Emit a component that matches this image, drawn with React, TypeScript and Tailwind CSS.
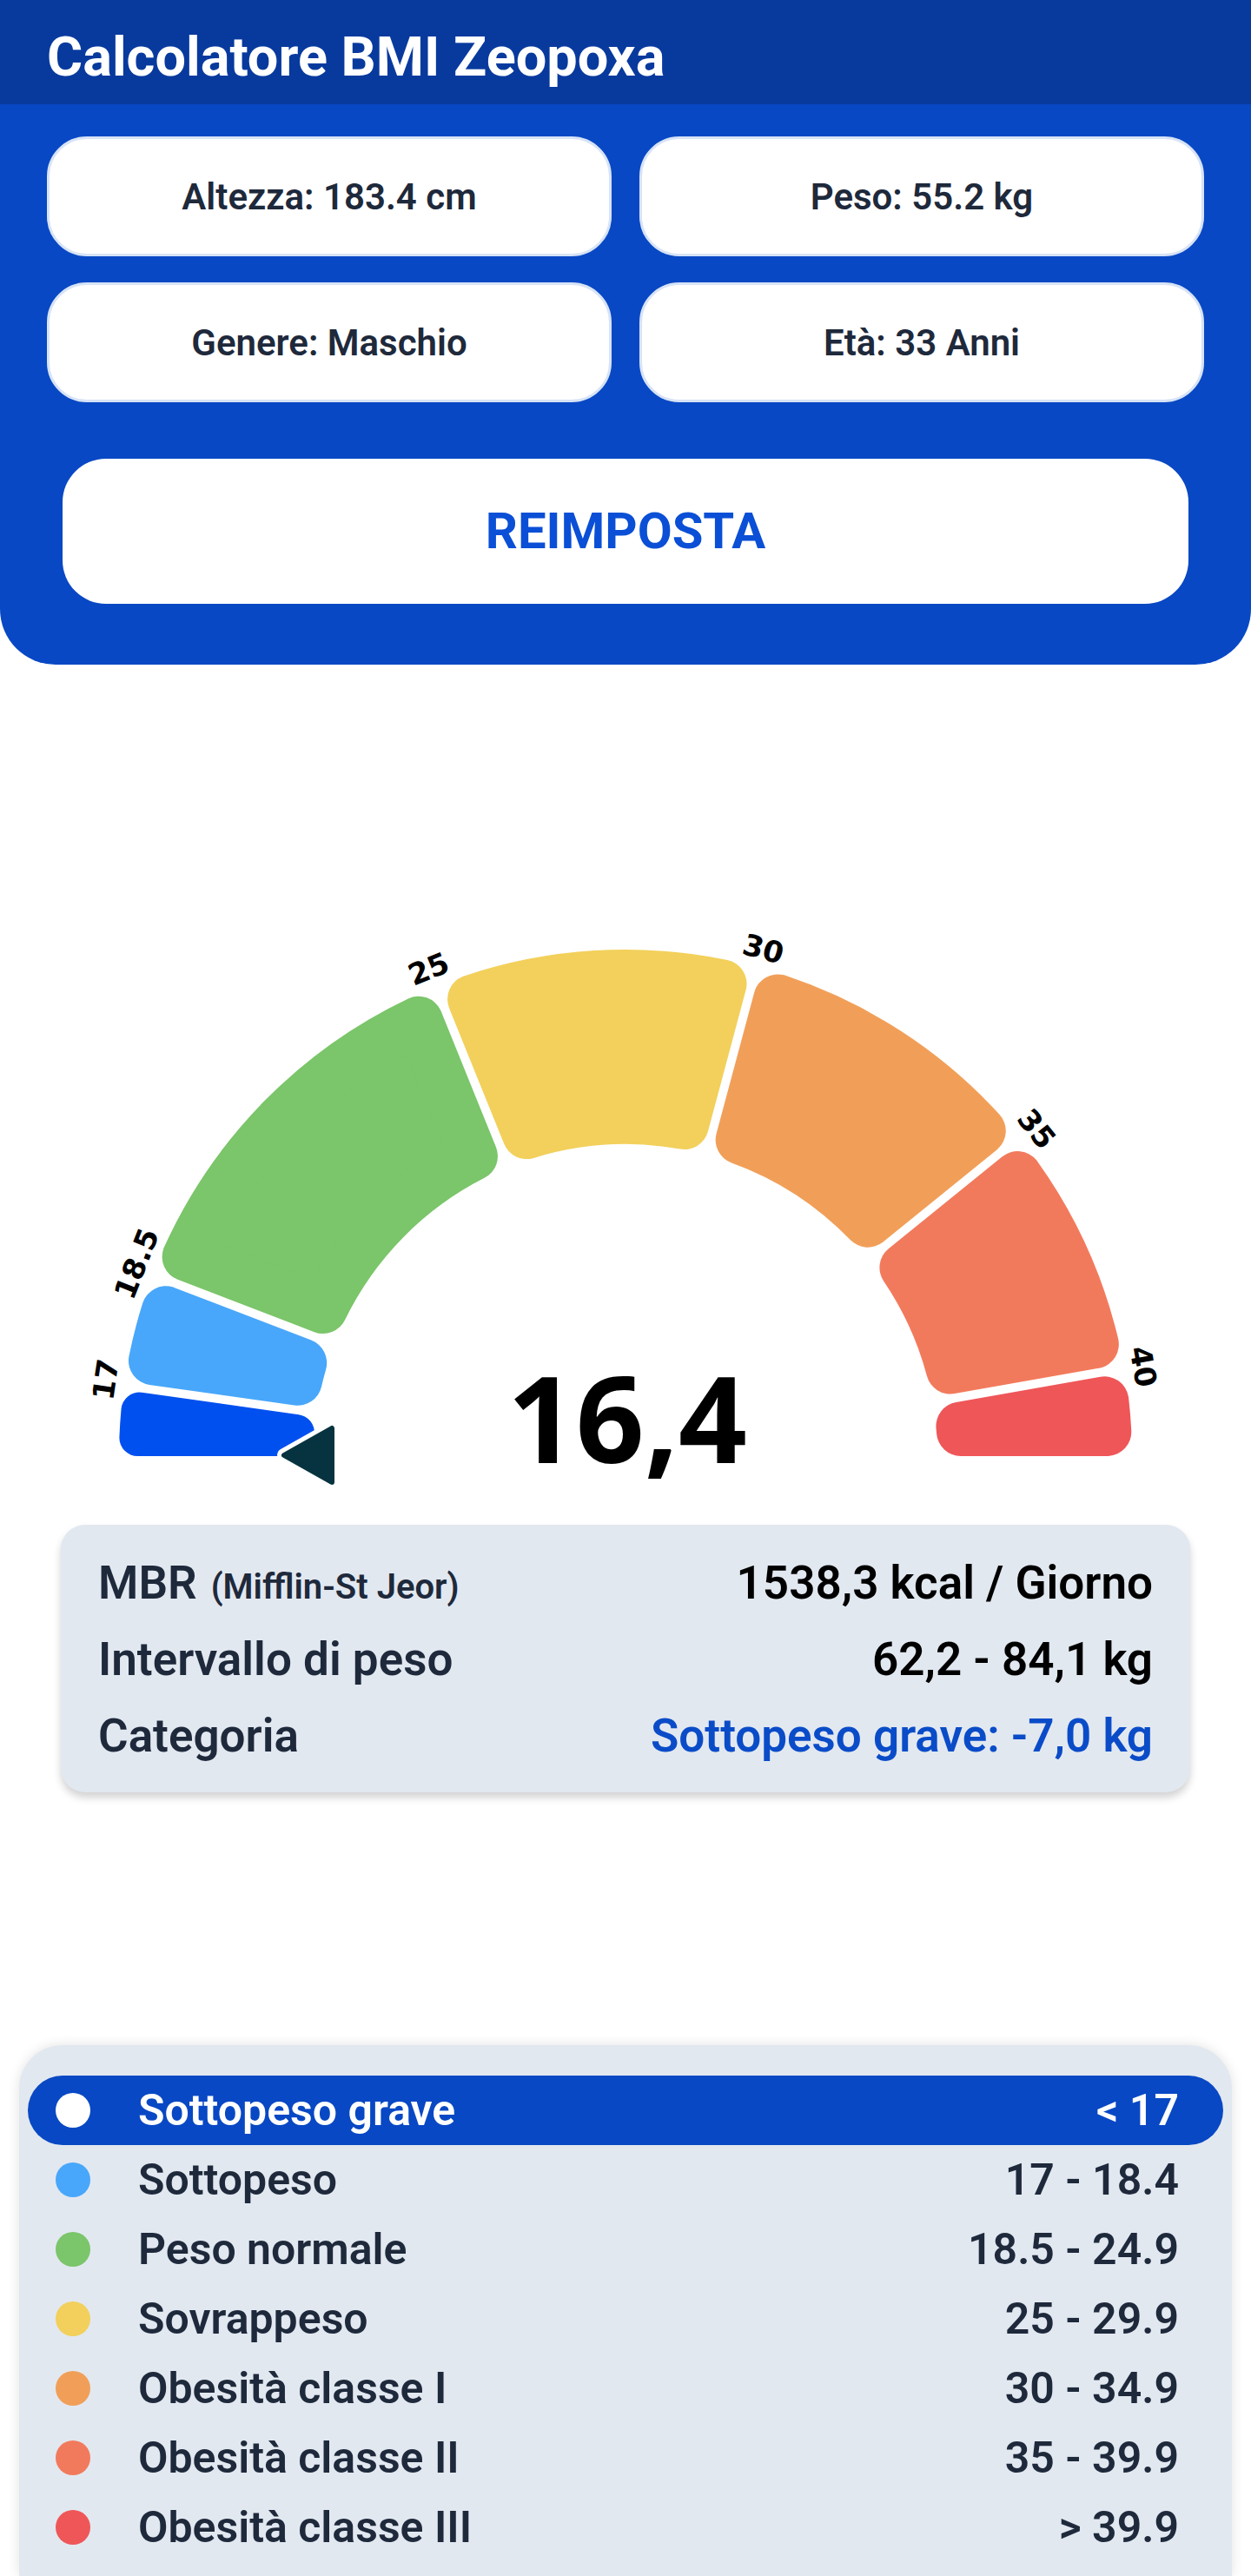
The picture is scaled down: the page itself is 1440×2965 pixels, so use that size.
import React from "react";

const CX = 720;
const CY = 1676;
const R_OUT = 583;
const R_IN = 359;

type Seg = { a1: number; a2: number; c: string; rc?: number; g1?: number; g2?: number };

const segs: Seg[] = [
  { a1: 180, a2: 172, c: "#0050ef", rc: 21, g1: 0, g2: 5 },
  { a1: 172, a2: 159, c: "#48a7fa" },
  { a1: 159, a2: 112, c: "#7bc56a" },
  { a1: 112, a2: 75, c: "#f2d05b" },
  { a1: 75, a2: 39, c: "#f19f58" },
  { a1: 39, a2: 10, c: "#f27a5c" },
  { a1: 10, a2: 0, c: "#ef5658", g2: 0 },
];

const labels = [
  { v: "17", a: 171.6 },
  { v: "18.5", a: 158.5 },
  { v: "25", a: 112 },
  { v: "30", a: 74.8 },
  { v: "35", a: 38.5 },
  { v: "40", a: 9.8 },
];

const rad = (d: number) => (d * Math.PI) / 180;
const pt = (rho: number, aRad: number) =>
  `${(CX + rho * Math.cos(aRad)).toFixed(2)} ${(CY - rho * Math.sin(aRad)).toFixed(2)}`;

function sectorPath(s: Seg) {
  const rc = s.rc ?? 28;
  const g1 = s.g1 ?? 5;
  const g2 = s.g2 ?? 5;
  const Ro = R_OUT - rc;
  const Ri = R_IN + rc;
  const d1 = g1 + rc;
  const d2 = g2 + rc;
  const A1o = rad(s.a1) - Math.asin(d1 / Ro);
  const A2o = rad(s.a2) + Math.asin(d2 / Ro);
  const A1i = rad(s.a1) - Math.asin(d1 / Ri);
  const A2i = rad(s.a2) + Math.asin(d2 / Ri);
  return {
    d: `M ${pt(Ro, A1o)} A ${Ro} ${Ro} 0 0 1 ${pt(Ro, A2o)} L ${pt(Ri, A2i)} A ${Ri} ${Ri} 0 0 0 ${pt(Ri, A1i)} Z`,
    rc,
  };
}

function Gauge() {
  return (
    <svg
      width={1440}
      height={990}
      viewBox="0 765 1440 990"
      className="block"
      xmlns="http://www.w3.org/2000/svg"
    >
      {segs.map((s, i) => {
        const p = sectorPath(s);
        return (
          <path
            key={i}
            d={p.d}
            fill={s.c}
            stroke={s.c}
            strokeWidth={p.rc * 2}
            strokeLinejoin="round"
          />
        );
      })}
      {labels.map((l) => {
        const x = CX + 605 * Math.cos(rad(l.a));
        const y = CY - 605 * Math.sin(rad(l.a));
        return (
          <text
            key={l.v}
            x={x}
            y={y}
            transform={`rotate(${90 - l.a} ${x} ${y})`}
            textAnchor="middle"
            dominantBaseline="central"
            fontFamily="'DejaVu Sans', sans-serif"
            fontWeight={700}
            fontSize={34}
            fill="#000"
          >
            {l.v}
          </text>
        );
      })}
      <polygon
        points="327,1675 382,1644 382,1706"
        fill="#ffffff"
        stroke="#ffffff"
        strokeWidth={16}
        strokeLinejoin="round"
      />
      <polygon
        points="327,1675 382,1644 382,1706"
        fill="#06333f"
        stroke="#06333f"
        strokeWidth={6}
        strokeLinejoin="round"
      />
      <text
        x={722}
        y={1684}
        textAnchor="middle"
        fontFamily="'Noto Sans', 'Open Sans', sans-serif"
        fontWeight={700}
        fontSize={138}
        fill="#000"
      >
        16,4
      </text>
    </svg>
  );
}

const legend = [
  { name: "Sottopeso grave", range: "< 17", c: "#ffffff", active: true },
  { name: "Sottopeso", range: "17 - 18.4", c: "#48a7fa" },
  { name: "Peso normale", range: "18.5 - 24.9", c: "#7bc56a" },
  { name: "Sovrappeso", range: "25 - 29.9", c: "#f2d05b" },
  { name: "Obesità classe I", range: "30 - 34.9", c: "#f19f58" },
  { name: "Obesità classe II", range: "35 - 39.9", c: "#f27a5c" },
  { name: "Obesità classe III", range: "> 39.9", c: "#ef5658" },
];

export default function App() {
  return (
    <div className="w-[1440px] h-[2965px] overflow-hidden bg-white font-['Roboto','Liberation_Sans',sans-serif]">
      <header className="h-[120px] bg-[#083a9e] px-[54px] pt-[10px] flex items-center">
        <h1 className="text-[63px] font-bold text-white leading-none">Calcolatore BMI Zeopoxa</h1>
      </header>

      <div className="bg-[#0848c4] rounded-b-[64px] px-[54px] pt-[37px] pb-[70px]">
        <div className="grid grid-cols-2 gap-x-[32px] gap-y-[30px]">
          {["Altezza: 183.4 cm", "Peso: 55.2 kg", "Genere: Maschio", "Età: 33 Anni"].map((t) => (
            <div
              key={t}
              className="h-[138px] rounded-[46px] bg-white border-[3px] border-[#d7e3f6] flex items-center justify-center text-[42px] font-semibold text-[#1e293b]"
            >
              {t}
            </div>
          ))}
        </div>
        <div className="mt-[65px] mx-[18px] h-[167px] rounded-[50px] bg-white flex items-center justify-center text-[58px] font-bold text-[#0a4fd6]">
          REIMPOSTA
        </div>
      </div>

      <Gauge />

      <div className="mx-[70px] h-[308px] rounded-[28px] bg-[#e2e8f0] shadow-[0_6px_10px_rgba(0,0,0,0.18)] px-[43px] pt-[24px] pb-[20px] text-[53px] font-semibold">
        <div className="h-[88px] flex items-center justify-between">
          <div className="flex items-baseline text-[#1e293b]">
            <span>MBR</span>
            <span className="ml-[16px] text-[40px]">(Mifflin-St Jeor)</span>
          </div>
          <span className="text-black">1538,3 kcal / Giorno</span>
        </div>
        <div className="h-[88px] flex items-center justify-between">
          <span className="text-[#1e293b]">Intervallo di peso</span>
          <span className="text-black">62,2 - 84,1 kg</span>
        </div>
        <div className="h-[88px] flex items-center justify-between">
          <span className="text-[#1e293b]">Categoria</span>
          <span className="text-[#0a4cc8]">Sottopeso grave: -7,0 kg</span>
        </div>
      </div>

      <div className="mt-[291px] mx-[22px] rounded-t-[50px] bg-[#e2e8f0] shadow-[0_0_14px_rgba(0,0,0,0.12)] pt-[35px] pb-[16px] px-[10px]">
        {legend.map((l) => (
          <div
            key={l.name}
            className={
              l.active
                ? "h-[80px] rounded-full bg-[#0848c4] flex items-center pl-[32px] pr-[51px] text-white text-[50px] font-semibold"
                : "h-[80px] flex items-center pl-[32px] pr-[51px] text-[#1e293b] text-[50px] font-semibold"
            }
          >
            <span className="w-[40px] h-[40px] rounded-full shrink-0" style={{ backgroundColor: l.c }} />
            <span className="ml-[55px] flex-1">{l.name}</span>
            <span>{l.range}</span>
          </div>
        ))}
      </div>
    </div>
  );
}
